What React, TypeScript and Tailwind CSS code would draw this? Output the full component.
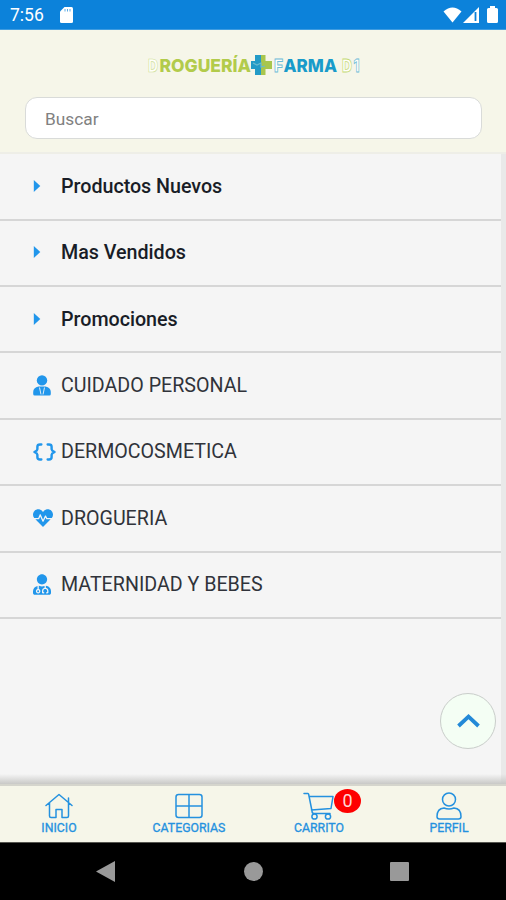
import type { ReactNode } from 'react';
import { FaHeartbeat, FaUserMd } from 'react-icons/fa';

interface Category {
  label: string;
  icon: ReactNode;
  bold?: boolean;
}

const Braces = () => (
  <svg className="w-[23px] h-[18px]" viewBox="0 0 22 18" preserveAspectRatio="none" fill="none" stroke="currentColor" strokeWidth="2.3" strokeLinecap="round" strokeLinejoin="round">
    <path d="M8 1.5H6.7Q4.2 1.5 4.2 3.8V6.2Q4.2 7.5 1.4 9Q4.2 10.5 4.2 11.8V14.2Q4.2 16.5 6.7 16.5H8" />
    <path d="M14 1.5H15.3Q17.8 1.5 17.8 3.8V6.2Q17.8 7.5 20.6 9Q17.8 10.5 17.8 11.8V14.2Q17.8 16.5 15.3 16.5H14" />
  </svg>
);

const Caret = () => (
  <svg className="w-[8px] h-[12px] -mt-[1px]" viewBox="0 0 8 12" fill="currentColor">
    <path d="M.8 0L7.3 6L.8 12Z" />
  </svg>
);

const TiePerson = () => (
  <svg className="w-[18px] h-[21px] -mt-[1px]" viewBox="0 0 18 21" fill="currentColor">
    <circle cx="9" cy="5.4" r="5.2" />
    <path d="M5.5 11.500H12.500Q17.800 12.500 17.800 17V19Q17.800 20.500 16.300 20.500H1.700Q.2 20.500 .2 19V17Q.2 12.500 5.500 11.500Z" />
    <path d="M6.500 12.500L8 19.500M11.500 12.500L10 19.500" stroke="#f5f5f5" strokeWidth=".9" />
  </svg>
);

const categories: Category[] = [
  { label: 'Productos Nuevos', icon: <Caret />, bold: true },
  { label: 'Mas Vendidos', icon: <Caret />, bold: true },
  { label: 'Promociones', icon: <Caret />, bold: true },
  { label: 'CUIDADO PERSONAL', icon: <TiePerson /> },
  { label: 'DERMOCOSMETICA', icon: <Braces /> },
  { label: 'DROGUERIA', icon: <FaHeartbeat className="w-[20px] h-[20px] -mt-[1px]" /> },
  { label: 'MATERNIDAD Y BEBES', icon: <FaUserMd className="w-[18px] h-[21px] -mt-[1px]" /> },
];

function StatusBar() {
  return (
    <div className="h-[30px] shrink-0 bg-[#0c82da] text-white flex items-center pl-[10px] pr-2 border-b border-[#3f9ce0]">
      <span className="text-[17.5px] leading-none pt-[3px] w-[50px]">7:56</span>
      <svg className="w-[13px] h-[16px]" viewBox="0 0 13 16">
        <path d="M4.5 0H11.5Q13 0 13 1.5V14.5Q13 16 11.5 16H1.5Q0 16 0 14.5V4.5Z" fill="white" />
        <path d="M5 2V4.5M7.5 2V4.5M10 2V4.5" stroke="#5babe5" strokeWidth="1" />
      </svg>
      <div className="ml-auto flex items-center">
        <svg className="w-[19px] h-[16px]" viewBox="0 0 19 16" fill="white">
          <path d="M9.5 15.5L.5 4.5Q9.5-3.5 18.5 4.5Z" />
        </svg>
        <svg className="w-[16px] h-[16px] ml-[1px]" viewBox="0 0 16 16">
          <path d="M0 16L16 0V16Z" fill="white" />
          <path d="M12.5 5V14" stroke="#0c82da" strokeWidth="1.8" />
        </svg>
        <svg className="w-[11px] h-[17px] ml-[8px]" viewBox="0 0 11 17" fill="white">
          <path d="M3 0H8V2H9.5Q11 2 11 3.5V15.5Q11 17 9.5 17H1.5Q0 17 0 15.5V3.5Q0 2 1.5 2H3Z" />
        </svg>
      </div>
    </div>
  );
}

function Logo() {
  return (
    <svg className="w-[216px] h-[24px] overflow-visible font-[Inter,sans-serif] text-[18px] font-extrabold" viewBox="0 0 216 24">
      <text x="3" y="18" fill="#fffffa" stroke="#cfdf98" strokeWidth=".7" textLength="10" lengthAdjust="spacingAndGlyphs">D</text>
      <text x="14.5" y="18" fill="#b2cb4b" textLength="91.5" lengthAdjust="spacingAndGlyphs">ROGUERÍA</text>
      <path d="M110 1H116V21H110V15H106V7H110Z" fill="#239bc7" />
      <path d="M116 1H120.5V7H127V15H120.5V21H116Z" fill="#a8c64d" />
      <path d="M108 9L112 11L116 9V13L120 12" fill="none" stroke="#69bbcf" strokeWidth="1.2" />
      <text x="129" y="18" fill="#fffffa" stroke="#6dbbd6" strokeWidth=".9" textLength="9" lengthAdjust="spacingAndGlyphs">F</text>
      <text x="138.5" y="18" fill="#199bca" textLength="53.5" lengthAdjust="spacingAndGlyphs">ARMA</text>
      <text x="197" y="18" fill="#fffffa" stroke="#c5da76" strokeWidth=".8" textLength="10" lengthAdjust="spacingAndGlyphs">D</text>
      <text x="208.5" y="18" fill="#fffffa" stroke="#6dbbd6" strokeWidth=".8" textLength="6" lengthAdjust="spacingAndGlyphs">1</text>
    </svg>
  );
}

function Header() {
  return (
    <header className="h-[124px] shrink-0 bg-[#f6f6e9] border-b-2 border-[#eeeee7] flex flex-col items-center pt-[24px]">
      <Logo />
      <input
        type="text"
        placeholder="Buscar"
        className="mt-[19px] ml-[1px] w-[457px] h-[42px] rounded-[12px] border border-[#d9dbd9] bg-white px-[19px] pt-[2px] text-[17.3px] placeholder:text-[#818181] outline-none"
      />
    </header>
  );
}

const HouseIcon = () => (
  <svg className="w-[28px] h-[26px]" viewBox="0 0 28 26" fill="none" stroke="currentColor" strokeWidth="1.5" strokeLinecap="round" strokeLinejoin="round">
    <path d="M1 12.5L14 1.5L27 12.5M4.5 10V23Q4.5 24.5 6 24.5H11V16.5H17V24.5H22Q23.5 24.5 23.5 23V5V10" />
  </svg>
);

const GridIcon = () => (
  <svg className="w-[28px] h-[26px]" viewBox="0 0 28 26" fill="none" stroke="currentColor" strokeWidth="1.5">
    <rect x="1" y="1.5" width="26" height="23" rx="2.5" />
    <path d="M14 1.5V24.5M1 13H27" />
  </svg>
);

const CartIcon = () => (
  <svg className="w-[32px] h-[28px]" viewBox="0 0 32 28" fill="none" stroke="currentColor" strokeWidth="1.5" strokeLinecap="round" strokeLinejoin="round">
    <path d="M1 1.5H5Q5.5 1.5 5.7 2.5L9 19Q9 21.5 11 21.5H27M6 4.5H30L28 16.5L8.5 18" />
    <circle cx="11.5" cy="24.5" r="2.6" />
    <circle cx="25" cy="24.5" r="2.6" />
  </svg>
);

const PersonIcon = () => (
  <svg className="w-[26px] h-[28px]" viewBox="0 0 26 28" fill="none" stroke="currentColor" strokeWidth="1.5" strokeLinejoin="round">
    <circle cx="13" cy="7.5" r="6.5" />
    <path d="M8 16Q13 18 18 16Q25 16.5 25 24.5Q25 27 22.5 27H3.5Q1 27 1 24.5Q1 16.5 8 16Z" />
  </svg>
);

const tabs = [
  { label: 'INICIO', icon: <HouseIcon /> },
  { label: 'CATEGORIAS', icon: <GridIcon /> },
  { label: 'CARRITO', icon: <CartIcon />, count: 0 },
  { label: 'PERFIL', icon: <PersonIcon /> },
];

function TabBar() {
  return (
    <nav className="h-[58px] shrink-0 bg-[#f6f6e9] border-t-2 border-[#d5d5cd] flex justify-center pl-[2px] text-[#2491df]">
      {tabs.map(t => (
        <button key={t.label} className="relative w-[130px] shrink-0 flex flex-col items-center pt-[6px]">
          <span className="h-[28px] flex items-center">{t.icon}</span>
          <span className="text-[12.3px] leading-[14px] mt-[1px] [-webkit-text-stroke:0.3px_currentColor]">{t.label}</span>
          {t.count !== undefined && (
            <span className="absolute left-[80px] top-[3px] w-[27px] h-[24px] rounded-[50%] bg-[#fe0000] text-[#ffd8d8] text-[18px] leading-[24px] text-center">
              {t.count}
            </span>
          )}
        </button>
      ))}
    </nav>
  );
}

function SystemNav() {
  return (
    <div className="h-[58px] shrink-0 bg-black border-t border-[#55554f] flex justify-between items-center px-[96px] pb-[1px]">
      <svg className="w-[19px] h-[21px]" viewBox="0 0 19 21" fill="#999999"><path d="M0 10.5L19 0V21Z" /></svg>
      <span className="w-[19px] h-[19px] rounded-full bg-[#999999] ml-[1px]" />
      <span className="w-[19px] h-[19px] rounded-[1px] bg-[#999999] mr-[1px]" />
    </div>
  );
}

export default function App() {
  return (
    <div className="w-[506px] h-[900px] overflow-hidden flex flex-col bg-[#f5f5f5] font-[Roboto,sans-serif]">
      <StatusBar />
      <Header />
      <main className="relative flex-1 min-h-0 flex">
        <ul className="flex-1 pt-[0.3px]">
          {categories.map(c => (
            <li key={c.label} className="h-[66.4px] border-b-2 border-[#d6d6d6] flex items-center pl-[33px]">
              <span className="w-[28px] shrink-0 text-[#2196eb]">{c.icon}</span>
              <span className={c.bold ? 'text-[19.7px] font-medium tracking-[-0.02px] text-[#191d27]' : 'text-[19.65px] font-normal text-[#30333a]'}>
                {c.label}
              </span>
            </li>
          ))}
        </ul>
        <div className="w-[5px] bg-[#e9e9e9]" />
        <div className="absolute bottom-0 inset-x-0 h-[10px] bg-linear-to-b from-transparent to-[#c9c9c7]" />
        <button className="absolute right-[10px] bottom-[35px] w-[56px] h-[56px] rounded-full border border-[#c9cdca] bg-[#f4fef4] flex items-center justify-center">
          <svg className="w-[23px] h-[16px]" viewBox="0 0 23 16" fill="none" stroke="#2389d7" strokeWidth="3.8">
            <path d="M1.5 13L11.5 3.5L21.5 13" />
          </svg>
        </button>
      </main>
      <TabBar />
      <SystemNav />
    </div>
  );
}
